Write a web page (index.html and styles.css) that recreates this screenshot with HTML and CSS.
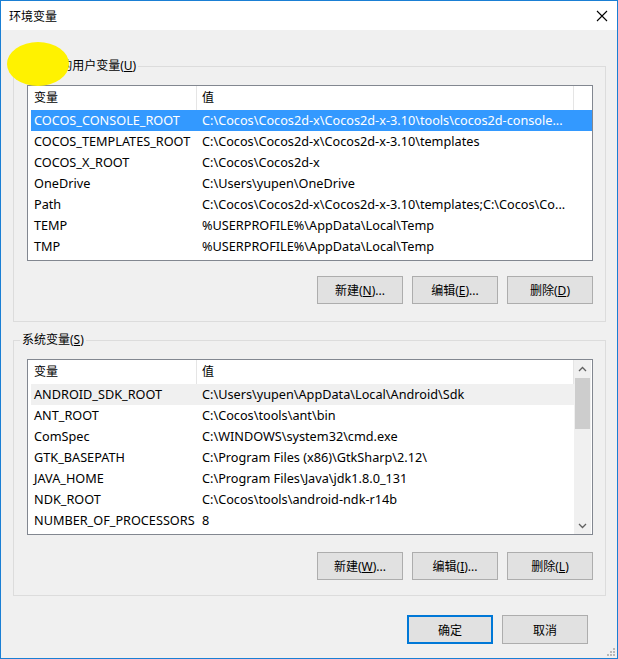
FILE: index.html
```html
<!DOCTYPE html>
<html lang="zh-CN">
<head>
<meta charset="utf-8">
<title>环境变量</title>
<link rel="stylesheet" href="styles.css">
</head>
<body>
<div class="window">
  <div class="titlebar">
    <span class="title">环境变量</span>
    <svg class="close" width="12" height="12" viewBox="0 0 12 12"><path d="M1 1 L11 11 M11 1 L1 11" stroke="#000" stroke-width="1.1" fill="none"/></svg>
  </div>
  <div class="content">
    <fieldset class="group">
      <legend>yupen 的用户变量(<u>U</u>)</legend>
      <div class="list">
        <div class="rows">
          <div class="list-header"><span class="hcell">变量</span><span class="hcell">值</span></div>
          <div class="row selected"><span class="cell">COCOS_CONSOLE_ROOT</span><span class="cell v">C:\Cocos\Cocos2d-x\Cocos2d-x-3.10\tools\cocos2d-console...</span></div>
          <div class="row"><span class="cell">COCOS_TEMPLATES_ROOT</span><span class="cell v">C:\Cocos\Cocos2d-x\Cocos2d-x-3.10\templates</span></div>
          <div class="row"><span class="cell">COCOS_X_ROOT</span><span class="cell v">C:\Cocos\Cocos2d-x</span></div>
          <div class="row"><span class="cell">OneDrive</span><span class="cell v">C:\Users\yupen\OneDrive</span></div>
          <div class="row"><span class="cell">Path</span><span class="cell v">C:\Cocos\Cocos2d-x\Cocos2d-x-3.10\templates;C:\Cocos\Co...</span></div>
          <div class="row"><span class="cell">TEMP</span><span class="cell v">%USERPROFILE%\AppData\Local\Temp</span></div>
          <div class="row"><span class="cell">TMP</span><span class="cell v">%USERPROFILE%\AppData\Local\Temp</span></div>
        </div>
      </div>
      <div class="btn-row">
        <button class="btn">新建(<u>N</u>)...</button>
        <button class="btn">编辑(<u>E</u>)...</button>
        <button class="btn">删除(<u>D</u>)</button>
      </div>
    </fieldset>

    <fieldset class="group sys">
      <legend>系统变量(<u>S</u>)</legend>
      <div class="list">
        <div class="rows">
          <div class="list-header"><span class="hcell">变量</span><span class="hcell">值</span></div>
          <div class="row inactive"><span class="cell">ANDROID_SDK_ROOT</span><span class="cell v">C:\Users\yupen\AppData\Local\Android\Sdk</span></div>
          <div class="row"><span class="cell">ANT_ROOT</span><span class="cell v">C:\Cocos\tools\ant\bin</span></div>
          <div class="row"><span class="cell">ComSpec</span><span class="cell v">C:\WINDOWS\system32\cmd.exe</span></div>
          <div class="row"><span class="cell">GTK_BASEPATH</span><span class="cell v">C:\Program Files (x86)\GtkSharp\2.12\</span></div>
          <div class="row"><span class="cell">JAVA_HOME</span><span class="cell v">C:\Program Files\Java\jdk1.8.0_131</span></div>
          <div class="row"><span class="cell">NDK_ROOT</span><span class="cell v">C:\Cocos\tools\android-ndk-r14b</span></div>
          <div class="row"><span class="cell">NUMBER_OF_PROCESSORS</span><span class="cell v">8</span></div>
        </div>
        <div class="scrollbar">
          <div class="arrow"><svg width="9" height="6" viewBox="0 0 9 6"><path d="M1 5 L4.5 1.5 L8 5" stroke="#606060" stroke-width="1.3" fill="none"/></svg></div>
          <div class="track"><div class="thumb"></div></div>
          <div class="arrow"><svg width="9" height="6" viewBox="0 0 9 6"><path d="M1 1 L4.5 4.5 L8 1" stroke="#606060" stroke-width="1.3" fill="none"/></svg></div>
        </div>
      </div>
      <div class="btn-row">
        <button class="btn">新建(<u>W</u>)...</button>
        <button class="btn">编辑(<u>I</u>)...</button>
        <button class="btn">删除(<u>L</u>)</button>
      </div>
    </fieldset>

    <div class="dialog-buttons">
      <button class="btn default">确定</button>
      <button class="btn">取消</button>
    </div>
  </div>
  <svg class="grip" width="8" height="8" viewBox="0 0 8 8">
    <rect x="6" y="0" width="2" height="2" fill="#b8b8b8"/>
    <rect x="3" y="3" width="2" height="2" fill="#b8b8b8"/>
    <rect x="6" y="3" width="2" height="2" fill="#b8b8b8"/>
    <rect x="0" y="6" width="2" height="2" fill="#b8b8b8"/>
    <rect x="3" y="6" width="2" height="2" fill="#b8b8b8"/>
    <rect x="6" y="6" width="2" height="2" fill="#b8b8b8"/>
  </svg>
  <div class="marker"></div>
</div>
</body>
</html>
```

FILE: styles.css
```css
* { box-sizing: border-box; }

body {
  margin: 0;
  font-family: "Noto Sans", "Noto Sans CJK SC", sans-serif;
  font-size: 12px;
  color: #000;
}

.window {
  position: relative;
  width: 618px;
  height: 659px;
  border: 1px solid #1a7fd4;
  background: #f0f0f0;
  display: flex;
  flex-direction: column;
}

.titlebar {
  height: 29px;
  flex: none;
  background: #fff;
  display: flex;
  align-items: center;
  justify-content: space-between;
  padding: 0 9px 0 8px;
}

.title {
  font-family: "Noto Sans CJK SC", sans-serif;
  font-size: 12px;
}

.content {
  flex: 1;
  padding: 28px 11px 0 12px;
}

.group {
  margin: 0;
  min-width: 0;
  border: 1px solid #dcdcdc;
  padding: 11px 12px 17px 13px;
}

.group.sys {
  margin-top: 10px;
  padding-bottom: 15px;
}

.group legend {
  margin-left: -7px;
  padding: 0 2px;
  line-height: 16px;
  font-family: "Noto Sans", "Noto Sans CJK SC", sans-serif;
}

.list {
  height: 176px;
  border: 1px solid #828790;
  background: #fff;
  display: flex;
  overflow: hidden;
}

.rows {
  flex: 1;
  padding-left: 3px;
  min-width: 0;
}

.list-header {
  display: grid;
  grid-template-columns: 166px 377px;
  height: 24px;
}

.hcell {
  border-right: 1px solid #e5e5e5;
  line-height: 24px;
  padding-left: 3px;
}

.hcell + .hcell { padding-left: 5px; }

.row {
  display: grid;
  grid-template-columns: 166px 377px;
  height: 21px;
  line-height: 21px;
  white-space: nowrap;
  font-size: 12.7px;
}

.cell {
  overflow: hidden;
  padding-left: 3px;
}

.cell.v { padding-left: 5px; }

.row.selected {
  background: #3399ff;
  color: #fff;
}

.row.inactive {
  background: #f0f0f0;
}

.scrollbar {
  width: 17px;
  flex: none;
  margin-right: 1px;
  background: #f0f0f0;
  display: flex;
  flex-direction: column;
}

.arrow {
  height: 17px;
  display: flex;
  align-items: center;
  justify-content: center;
}

.track {
  flex: 1;
  padding: 1px 1px 0 1px;
}

.thumb {
  height: 51px;
  background: #cdcdcd;
}

.btn-row {
  display: flex;
  justify-content: flex-end;
  gap: 9px;
  margin-top: 15px;
}

.group.sys .btn-row { margin-top: 17px; }

.btn {
  width: 86px;
  height: 28px;
  background: #e1e1e1;
  border: 1px solid #adadad;
  font-family: "Noto Sans", "Noto Sans CJK SC", sans-serif;
  font-size: 12px;
  color: #000;
  padding: 0;
}

.dialog-buttons {
  display: flex;
  justify-content: flex-end;
  gap: 9px;
  margin-top: 19px;
  margin-right: 18px;
}

.dialog-buttons .btn { height: 29px; }

.btn.default {
  border: 2px solid #0078d7;
}

.grip {
  position: absolute;
  right: 2px;
  bottom: 2px;
}

.marker {
  position: absolute;
  left: 6px;
  top: 41px;
  width: 62px;
  height: 44px;
  border-radius: 50%;
  background: #fff200;
}
```
